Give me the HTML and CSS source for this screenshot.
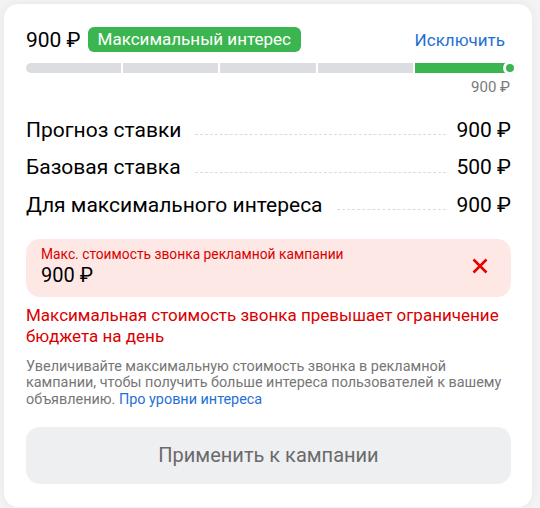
FILE: index.html
```html
<!DOCTYPE html>
<html>
<head>
  <link rel="stylesheet" href="styles.css">
</head>
<body>
  <div class="card">
    <div class="head">
      <span class="price">900 ₽</span>
      <span class="badge">Максимальный интерес</span>
      <a class="exclude" href="#">Исключить</a>
    </div>

    <div class="scale">
      <div class="seg"></div>
      <div class="seg"></div>
      <div class="seg"></div>
      <div class="seg"></div>
      <div class="seg seg-active"><span class="knob"></span></div>
    </div>
    <div class="scale-caption">900 ₽</div>

    <div class="rates">
      <div class="rate"><span class="rate-name">Прогноз ставки</span><span class="leader"></span><span class="rate-value">900 ₽</span></div>
      <div class="rate"><span class="rate-name">Базовая ставка</span><span class="leader"></span><span class="rate-value">500 ₽</span></div>
      <div class="rate"><span class="rate-name">Для максимального интереса</span><span class="leader"></span><span class="rate-value">900 ₽</span></div>
    </div>

    <div class="field field-error">
      <div class="field-body">
        <div class="field-label">Макс. стоимость звонка рекламной кампании</div>
        <div class="field-value">900 ₽</div>
      </div>
      <svg class="field-clear" width="16" height="16" viewBox="0 0 16 16">
        <path d="M1.5 1.5 L14.5 14.5 M14.5 1.5 L1.5 14.5" stroke="#e60000" stroke-width="2.6" fill="none"/>
      </svg>
    </div>

    <p class="error-text">Максимальная стоимость звонка превышает ограничение бюджета на день</p>
    <p class="hint">Увеличивайте максимальную стоимость звонка в рекламной кампании, чтобы получить больше интереса пользователей к вашему объявлению. <a href="#">Про уровни интереса</a></p>

    <button class="apply">Применить к кампании</button>
  </div>
</body>
</html>
```

FILE: styles.css
```css
body {
  margin: 0;
  background: #f3f3f3;
  font-family: Roboto, "Noto Sans", sans-serif;
  color: #000;
}
.card {
  width: 485px;
  margin: 4px 0 0 4px;
  padding: 23px 21px 23px 22px;
  background: white;
  border-radius: 14px;
  box-shadow: 0 0 8px rgba(0,0,0,0.06);
}
.head {
  display: flex;
  align-items: center;
  height: 25px;
}
.price {
  font-size: 21px;
}
.badge {
  margin-left: 7px;
  padding: 0 10px;
  height: 25px;
  line-height: 25px;
  background: #3bb54f;
  color: white;
  font-size: 17px;
  border-radius: 6px;
}
.exclude {
  margin-left: auto;
  margin-right: 6px;
  color: #1f6fd6;
  font-size: 17px;
  text-decoration: none;
}
.scale {
  display: flex;
  gap: 2px;
  height: 10px;
  margin-top: 11px;
}
.seg {
  flex: 1;
  background: #dcdde0;
}
.seg:first-child {
  border-radius: 5px 0 0 5px;
}
.seg-active {
  position: relative;
  background: #3bb54f;
  margin-right: 1px;
}
.knob {
  position: absolute;
  right: -7px;
  top: 50%;
  width: 8px;
  height: 8px;
  margin-top: -7px;
  border: 3px solid white;
  border-radius: 50%;
  background: #3bb54f;
  box-shadow: 0 0 2px rgba(0,0,0,0.1);
}
.scale-caption {
  margin-top: 5px;
  text-align: right;
  font-size: 15px;
  color: #7a7a7a;
  padding-right: 1px;
}
.rates {
  margin-top: 15px;
}
.rate {
  display: flex;
  align-items: center;
  height: 37.5px;
  font-size: 21px;
}
.leader {
  flex: 1;
  margin: 10px 10px 0 14px;
  border-bottom: 1px dashed #dcdcdc;
}
.field {
  display: flex;
  align-items: center;
  margin-top: 15px;
  padding: 6px 23px 9px 15px;
  border-radius: 14px;
}
.field-error {
  background: #fde8e6;
}
.field-body {
  flex: 1;
}
.field-label {
  font-size: 13.8px;
  line-height: 18px;
  color: #d90000;
}
.field-value {
  font-size: 20px;
  line-height: 25px;
}
.error-text {
  margin: 8px 0 0;
  font-size: 17px;
  line-height: 21.5px;
  color: #d90000;
}
.hint {
  margin: 11px 0 0;
  font-size: 14.4px;
  line-height: 16.6px;
  color: #767676;
}
.hint a {
  color: #1f6fd6;
  text-decoration: none;
}
.apply {
  display: block;
  width: 100%;
  height: 57px;
  margin-top: 18.5px;
  border: none;
  border-radius: 14px;
  background: #eeeff1;
  color: #6a6a6a;
  font-family: inherit;
  font-size: 20px;
}
```
